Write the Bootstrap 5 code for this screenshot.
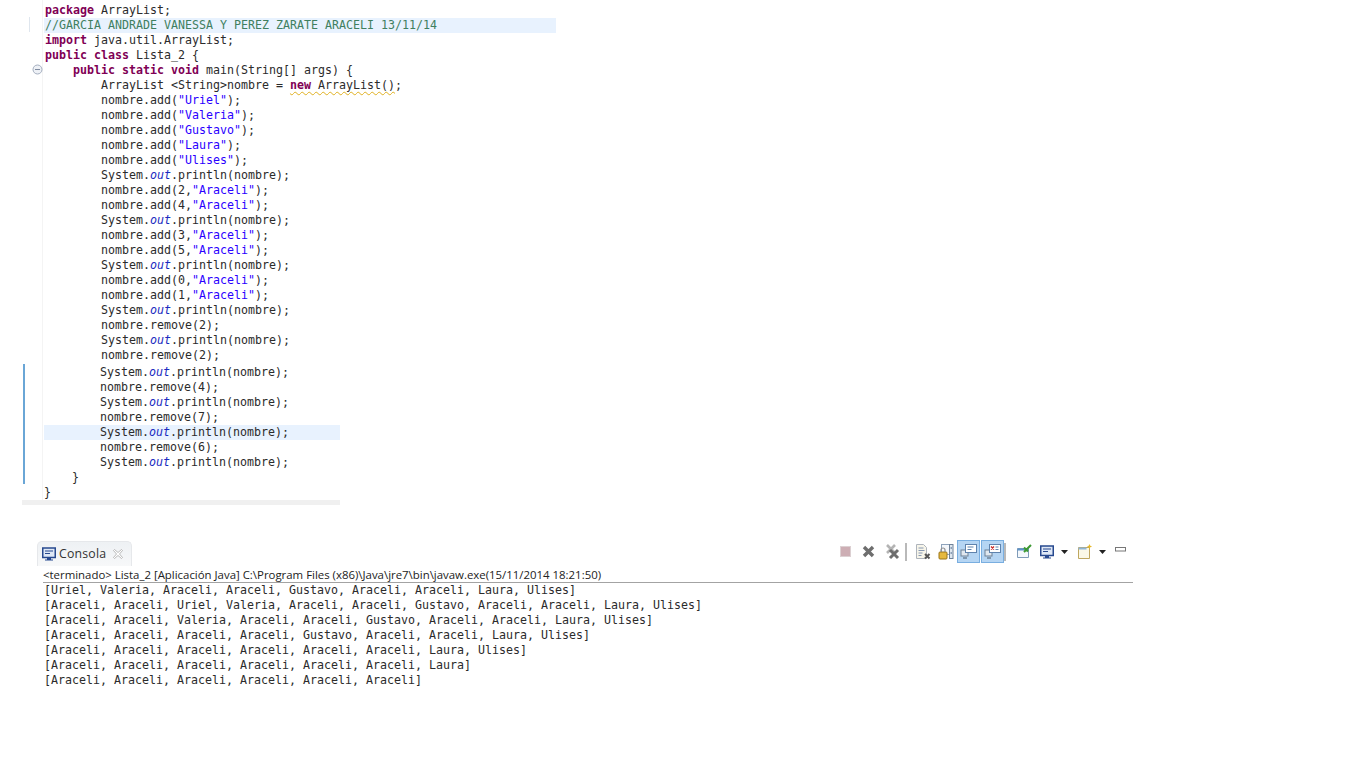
<!DOCTYPE html>
<html lang="es">
<head>
<meta charset="utf-8">
<title>Lista_2</title>
<link href="https://cdn.jsdelivr.net/npm/bootstrap@5.3.0/dist/css/bootstrap.min.css" rel="stylesheet">
<style>
html,body{background:#fff;height:100%;overflow:hidden}
body{color:#222}
.ed-wrap{position:relative;height:541px;padding-top:3px}
.code-col{width:512px;margin-left:44px}
.ln{font:11.63px/15px "DejaVu Sans Mono","Liberation Mono",monospace;height:15px;white-space:pre;padding-left:1px;color:#2b2b2b}
.ln b{color:#7f0055;font-weight:700}
.ln i{color:#1a2bc0}
.ln s{color:#2a00ff;text-decoration:none}
.ln u{text-decoration:underline wavy #e0b020 1px;text-underline-offset:2px}
.cmt{color:#3f7f5f;background:#e8f2fe}
.chunk2{margin-top:2px;width:296px}
.chunk2 .ln{padding-left:0}
.cur{background:#e8f2fe}
.mark-blue{position:absolute;left:23px;top:364px;width:2px;height:120px;background:#6aa6d6}
.mark-gray{position:absolute;left:29px;top:17px;width:1px;height:15px;background:#dfe6ee}
.gut-line{position:absolute;left:42px;top:0;width:1px;height:500px;background:#f4f4f4}
.hbar{position:absolute;left:22px;top:500px;width:318px;height:5px;background:#f0f0f0}
.fold{position:absolute;left:32px;top:64px}
.head-row{height:25px;padding-left:37px}
.tab-c{width:95px;height:25px;border-radius:5px 5px 0 0;background:linear-gradient(#eef1f4,#f7f8f9);border:1px solid #e6e8eb;border-bottom:0;padding-left:4px;font:12.3px/1 "Open Sans","Liberation Sans",sans-serif;color:#333}
.tab-c span{margin:0 7px 0 3px;letter-spacing:.2px}
.tbar{margin-left:auto;width:532px;height:23px;position:relative;top:-1px}
.tb{width:23px;height:23px;flex:none}
.tb.on{background:#b5d5f3;border:1px solid #79aee0}
.sp{width:2px;height:18px;background:#b9b9b9;flex:none}
.sp-a{margin:0 4px 0 2px}
.gap-one{margin-left:1px}
.gap-six{margin-left:6px}
.gap-two{margin-left:2px}
.cr{width:13px;height:23px;flex:none}
.min-ic{margin-top:7px}
.info{margin-left:43px;width:1090px;height:17px;border-bottom:1px solid #a3a3a3;font:11.41px/17px "Open Sans","Liberation Sans",sans-serif;color:#222;white-space:pre}
.con{margin-left:44px}
.con .ln{color:#2b2b2b;padding-left:0}
</style>
</head>
<body>
<main>
<section class="ed-wrap">
<div class="gut-line"></div>
<div class="mark-gray"></div>
<svg class="fold" width="11" height="11" viewBox="0 0 11 11"><circle cx="5.5" cy="5.5" r="4.5" fill="#eef1f6" stroke="#a4aebf"/><path d="M3 5.5h5" stroke="#7f8ba0"/></svg>
<div class="code-col">
<div class="ln"><b>package</b> ArrayList;</div>
<div class="ln cmt">//GARCIA ANDRADE VANESSA Y PEREZ ZARATE ARACELI 13/11/14</div>
<div class="ln"><b>import</b> java.util.ArrayList;</div>
<div class="ln"><b>public</b> <b>class</b> Lista_2 {</div>
<div class="ln">    <b>public</b> <b>static</b> <b>void</b> main(String[] args) {</div>
<div class="ln">        ArrayList &lt;String&gt;nombre = <b><u>new</u></b><u> ArrayList()</u>;</div>
<div class="ln">        nombre.add(<s>"Uriel"</s>);</div>
<div class="ln">        nombre.add(<s>"Valeria"</s>);</div>
<div class="ln">        nombre.add(<s>"Gustavo"</s>);</div>
<div class="ln">        nombre.add(<s>"Laura"</s>);</div>
<div class="ln">        nombre.add(<s>"Ulises"</s>);</div>
<div class="ln">        System.<i>out</i>.println(nombre);</div>
<div class="ln">        nombre.add(2,<s>"Araceli"</s>);</div>
<div class="ln">        nombre.add(4,<s>"Araceli"</s>);</div>
<div class="ln">        System.<i>out</i>.println(nombre);</div>
<div class="ln">        nombre.add(3,<s>"Araceli"</s>);</div>
<div class="ln">        nombre.add(5,<s>"Araceli"</s>);</div>
<div class="ln">        System.<i>out</i>.println(nombre);</div>
<div class="ln">        nombre.add(0,<s>"Araceli"</s>);</div>
<div class="ln">        nombre.add(1,<s>"Araceli"</s>);</div>
<div class="ln">        System.<i>out</i>.println(nombre);</div>
<div class="ln">        nombre.remove(2);</div>
<div class="ln">        System.<i>out</i>.println(nombre);</div>
<div class="ln">        nombre.remove(2);</div>
<div class="chunk2">
<div class="ln">        System.<i>out</i>.println(nombre);</div>
<div class="ln">        nombre.remove(4);</div>
<div class="ln">        System.<i>out</i>.println(nombre);</div>
<div class="ln">        nombre.remove(7);</div>
<div class="ln cur">        System.<i>out</i>.println(nombre);</div>
<div class="ln">        nombre.remove(6);</div>
<div class="ln">        System.<i>out</i>.println(nombre);</div>
<div class="ln">    }</div>
<div class="ln">}</div>
</div>
</div>
<div class="mark-blue"></div>
<div class="hbar"></div>
</section>

<section>
<div class="head-row d-flex align-items-start">
<div class="tab-c d-flex align-items-center">
<svg width="14" height="14" viewBox="0 0 14 14"><rect x=".75" y="1" width="12.5" height="9.500" fill="#dfe8f6" stroke="#27498f" stroke-width="1.500"/><path d="M3 4h8M3 6.500h5" stroke="#27498f"/><path d="M5 11h4v1.500h2v1H3v-1h2z" fill="#27498f"/></svg>
<span>Consola</span>
<svg width="10" height="10" viewBox="0 0 10 10"><path d="M1.500.5L5 3.500 8.500.5l1 1L6.500 5l3 3.500-1 1L5 6.500l-3.500 3-1-1L3.500 5l-3-3.500z" fill="#fff" stroke="#aaa" stroke-width=".8"/></svg>
</div>
<div class="tbar d-flex align-items-center">
<div class="tb d-flex align-items-center justify-content-center"><svg width="11" height="11"><rect x=".5" y=".5" width="10" height="10" fill="#cdaeb4" stroke="#dcd0d2"/></svg></div>
<div class="tb d-flex align-items-center justify-content-center"><svg width="13" height="13" viewBox="0 0 13 13"><path d="M2 2l9 9M11 2l-9 9" stroke="#6e6e6e" stroke-width="3.400"/></svg></div>
<div class="tb d-flex align-items-center justify-content-center"><svg width="16" height="16" viewBox="0 0 16 16"><path d="M3 1l8 8M11 1L3 9" stroke="#b4b4b4" stroke-width="2.600"/><path d="M6 6l8 8M14 6l-8 8" stroke="#6e6e6e" stroke-width="3"/></svg></div>
<div class="sp sp-a"></div>
<div class="tb d-flex align-items-center justify-content-center"><svg width="16" height="16" viewBox="0 0 16 16"><path d="M1.500.5h7l3 3v11h-10z" fill="#f7f5ea" stroke="#aeb4bc"/><path d="M3.500 4h5M3.500 6.500h6M3.500 9h4M3.500 11.500h3" stroke="#8798b2"/><path d="M10 10l4.500 4.500M14.500 10L10 14.500" stroke="#555" stroke-width="2"/></svg></div>
<div class="tb d-flex align-items-center justify-content-center"><svg width="16" height="16" viewBox="0 0 16 16"><rect x="3.500" y=".5" width="8" height="10" fill="#f4f7fb" stroke="#8ea3bb"/><rect x="11.500" y=".5" width="3.500" height="14" fill="#dfe7ef" stroke="#6f8299"/><path d="M12.500 4h1.500M12.500 9h1.500" stroke="#3d5a80"/><rect x="1" y="8" width="8" height="7" rx="1" fill="#e6b93f" stroke="#9a7417"/><path d="M3 8V6a2 2 0 0 1 4 0v2" fill="none" stroke="#8d8d8d" stroke-width="1.200"/></svg></div>
<div class="tb on d-flex align-items-center justify-content-center"><svg width="17" height="17" viewBox="0 0 17 17"><rect x="1" y="7" width="7" height="6" fill="#dfe7ef" stroke="#6e8196"/><path d="M3 15h4" stroke="#6e8196" stroke-width="1.500"/><rect x="5.500" y="1.500" width="11" height="8" fill="#fff" stroke="#5f83ad"/><path d="M7.500 4h6M7.500 6.500h4" stroke="#5f83ad"/></svg></div>
<div class="tb on gap-one d-flex align-items-center justify-content-center"><svg width="17" height="17" viewBox="0 0 17 17"><rect x="1" y="7" width="7" height="6" fill="#dfe7ef" stroke="#6e8196"/><path d="M3 15h4" stroke="#6e8196" stroke-width="1.500"/><rect x="5.500" y="1.500" width="11" height="8" fill="#fff" stroke="#5f83ad"/><path d="M7 3.500l3 3M10 3.500l-3 3" stroke="#c62828" stroke-width="1.300"/><path d="M11.500 4h3M11.500 6.500h3" stroke="#5f83ad"/></svg></div>
<div class="sp"></div>
<div class="tb gap-six d-flex align-items-center justify-content-center"><svg width="16" height="15" viewBox="0 0 16 15"><path d="M1.500 4.500h11v9h-11z" fill="#f4f8fc" stroke="#7f9bb8"/><path d="M1.500 4.500h11v2h-11z" fill="#5f93c6"/><path d="M15 1l-4.500 4.500M8 3.500l4 4M10.500 5.500L8 8" fill="none" stroke="#3d9a33" stroke-width="2"/></svg></div>
<div class="tb d-flex align-items-center justify-content-center"><svg width="14" height="14" viewBox="0 0 14 14"><rect x=".75" y="1" width="12.500" height="9.500" fill="#dfe8f6" stroke="#27498f" stroke-width="1.500"/><path d="M3 4h8M3 6.500h5" stroke="#27498f"/><path d="M5 11h4v1.500h2v1H3v-1h2z" fill="#27498f"/></svg></div>
<div class="cr d-flex align-items-center justify-content-center"><svg width="7" height="4"><path d="M0 0h7L3.500 4z" fill="#222"/></svg></div>
<div class="tb gap-two d-flex align-items-center justify-content-center"><svg width="16" height="15" viewBox="0 0 16 15"><path d="M1.500 3.500h11v11h-11z" fill="#fbf8e6" stroke="#bfa75f"/><path d="M1.500 3.500h8v2h-8z" fill="#8fb5d8"/><path d="M12.500 0l.8 1.800 1.800.7-1.800.7-.8 1.800-.8-1.800-1.800-.7 1.800-.7z" fill="#e8b92a"/></svg></div>
<div class="cr d-flex align-items-center justify-content-center"><svg width="7" height="4"><path d="M0 0h7L3.500 4z" fill="#222"/></svg></div>
<div class="tb d-flex align-items-start justify-content-center"><svg class="min-ic" width="11" height="5"><rect x=".5" y=".5" width="10" height="3.500" fill="#fff" stroke="#777"/></svg></div>
</div>
</div>
<div class="info">&lt;terminado&gt; Lista_2 [Aplicación Java] C:\Program Files (x86)\Java\jre7\bin\javaw.exe(15/11/2014 18:21:50)</div>
<div class="con">
<div class="ln">[Uriel, Valeria, Araceli, Araceli, Gustavo, Araceli, Araceli, Laura, Ulises]</div>
<div class="ln">[Araceli, Araceli, Uriel, Valeria, Araceli, Araceli, Gustavo, Araceli, Araceli, Laura, Ulises]</div>
<div class="ln">[Araceli, Araceli, Valeria, Araceli, Araceli, Gustavo, Araceli, Araceli, Laura, Ulises]</div>
<div class="ln">[Araceli, Araceli, Araceli, Araceli, Gustavo, Araceli, Araceli, Laura, Ulises]</div>
<div class="ln">[Araceli, Araceli, Araceli, Araceli, Araceli, Araceli, Laura, Ulises]</div>
<div class="ln">[Araceli, Araceli, Araceli, Araceli, Araceli, Araceli, Laura]</div>
<div class="ln">[Araceli, Araceli, Araceli, Araceli, Araceli, Araceli]</div>
</div>
</section>
</main>
<script src="https://cdn.jsdelivr.net/npm/bootstrap@5.3.0/dist/js/bootstrap.bundle.min.js"></script>
</body>
</html>
